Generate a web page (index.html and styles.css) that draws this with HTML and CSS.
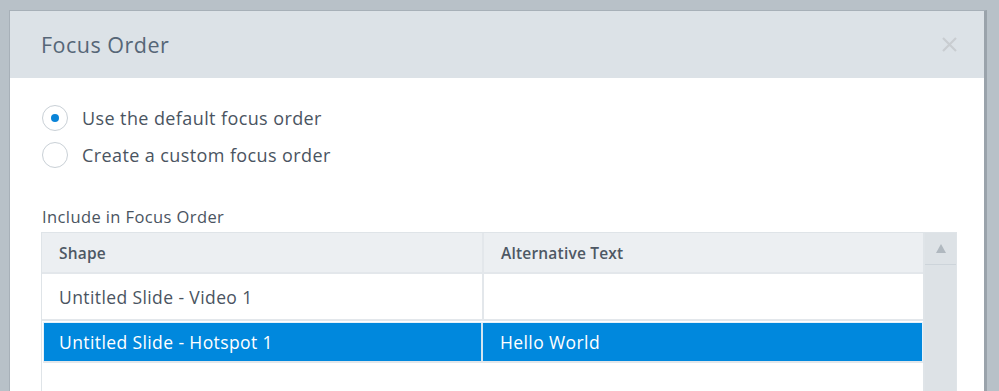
FILE: index.html
```html
<!DOCTYPE html>
<html lang="en">
<head>
    <meta charset="UTF-8">
    <title>Focus Order</title>
    <link rel="stylesheet" href="styles.css">
</head>
<body>
    <div class="dialog">
        <div class="dialog-header">
            <span class="dialog-title">Focus Order</span>
            <svg class="close" width="15" height="15" viewBox="0 0 15 15">
                <path d="M1 1 L14 14 M14 1 L1 14" stroke="#c9cdd1" stroke-width="2.2" fill="none"/>
            </svg>
        </div>
        <div class="dialog-body">
            <label class="radio-row">
                <span class="radio checked"></span>
                <span>Use the default focus order</span>
            </label>
            <label class="radio-row">
                <span class="radio"></span>
                <span>Create a custom focus order</span>
            </label>

            <div class="section-label">Include in Focus Order</div>
            <div class="grid">
                <div class="grid-main">
                    <div class="row head">
                        <div class="cell">Shape</div>
                        <div class="cell">Alternative Text</div>
                    </div>
                    <div class="row">
                        <div class="cell">Untitled Slide - Video 1</div>
                        <div class="cell"></div>
                    </div>
                    <div class="row selected">
                        <div class="cell">Untitled Slide - Hotspot 1</div>
                        <div class="cell">Hello World</div>
                    </div>
                    <div class="row empty"></div>
                </div>
                <div class="scrollbar">
                    <div class="scroll-up"><span class="arrow"></span></div>
                </div>
            </div>
        </div>
    </div>
</body>
</html>
```

FILE: styles.css
```css
body {
    margin: 0;
    height: 391px;
    overflow: hidden;
    background-color: #b8c1c8;
    font-family: "Open Sans", "Noto Sans", sans-serif;
    padding: 10px 0 0 9px;
    box-sizing: border-box;
}

.dialog {
    width: 978px;
    height: 381px;
    background-color: #fff;
    border-left: 1px solid #a7b0b8;
    border-top: 1px solid #a7b0b8;
    border-right: 3px solid #9aa3ab;
    box-sizing: border-box;
    overflow: hidden;
}

.dialog-header {
    height: 67px;
    background-color: #dce2e7;
    display: flex;
    align-items: center;
    justify-content: space-between;
    padding: 0 27px 0 31px;
    box-sizing: border-box;
}

.dialog-title {
    font-size: 21.5px;
    letter-spacing: 0.5px;
    color: #566677;
    margin-top: -1px;
}

.close {
    display: block;
}

.dialog-body {
    padding: 21px 27px 0 32px;
    color: #4a5461;
}

.radio-row {
    display: flex;
    align-items: center;
    gap: 14px;
    height: 37px;
    font-size: 18px;
    letter-spacing: 0.4px;
}

.radio {
    width: 26px;
    height: 26px;
    border: 1px solid #c9d0d6;
    border-radius: 50%;
    box-sizing: border-box;
    display: flex;
    align-items: center;
    justify-content: center;
}

.radio.checked::after {
    content: "";
    width: 8px;
    height: 8px;
    border-radius: 50%;
    background-color: #0a84d8;
}

.section-label {
    margin-top: 32px;
    font-size: 16.5px;
    letter-spacing: 0.4px;
    height: 27px;
}

.grid {
    display: flex;
    margin-left: -1px;
    border: 1px solid #dfe4e8;
    height: 170px;
}

.grid-main {
    flex: 1;
    border-right: 2px solid #dfe4e8;
}

.row {
    display: flex;
    height: 45px;
    border-bottom: 2px solid #e3e7eb;
    font-size: 17.5px;
    letter-spacing: 0.4px;
}

.row.head {
    height: 39px;
    background-color: #eceff2;
    font-weight: 600;
    font-size: 15.5px;
    letter-spacing: 0.2px;
    color: #4e5864;
}

.row .cell {
    display: flex;
    align-items: center;
    padding-left: 17px;
}

.row .cell:first-child {
    width: 423px;
    border-right: 2px solid #e3e7eb;
}

.row.selected {
    height: 38px;
    margin: 1px 0 0 1px;
    background-color: #0088dd;
    color: #fff;
    border: 1px solid #e6f2fb;
    border-bottom: 2px solid #e3e7eb;
}

.row.selected .cell:first-child {
    width: 422px;
    padding-left: 15px;
    border-right: 2px solid #d3e4f0;
}

.row.empty {
    border-bottom: none;
}

.scrollbar {
    width: 31px;
    background-color: #dde2e6;
}

.scroll-up {
    height: 31px;
    border-bottom: 1px solid #cdd4da;
    display: flex;
    align-items: center;
    justify-content: center;
}

.arrow {
    width: 0;
    height: 0;
    border-left: 5px solid transparent;
    border-right: 5px solid transparent;
    border-bottom: 9px solid #b0b8bf;
}
```
